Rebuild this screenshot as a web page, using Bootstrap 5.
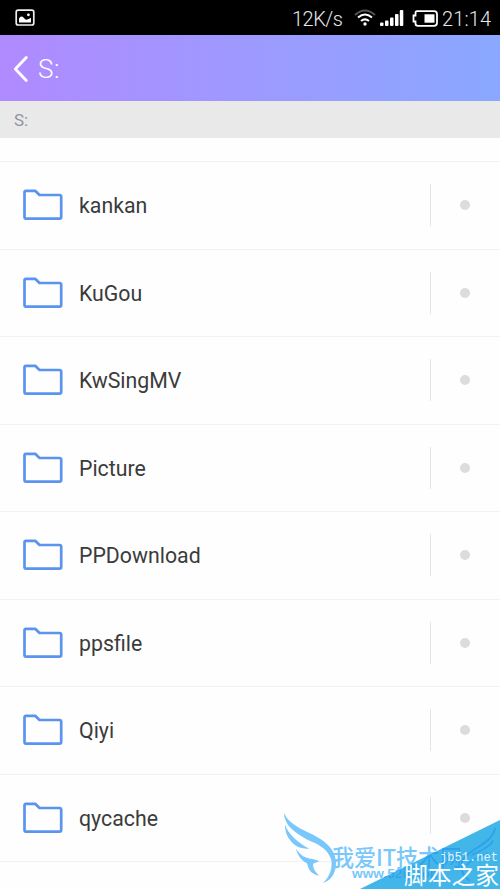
<!DOCTYPE html>
<html lang="zh-CN">
<head>
<meta charset="utf-8">
<meta name="viewport" content="width=device-width, initial-scale=1">
<title>S:</title>
<link rel="stylesheet" href="https://cdn.jsdelivr.net/npm/bootstrap@5.3.0/dist/css/bootstrap.min.css">
<style>
body{font-family:Roboto,"Noto Sans CJK SC",sans-serif;background:#fefefe;color:#3b3b3b}
.screen{width:500px;height:889px}
.status{height:35px;background:#000;color:#e8e8e8;font-size:20px;font-weight:300;padding:1px 8px 0 15px}
.status span{line-height:33px;white-space:nowrap;padding-top:2px}
.rate{width:50px;margin-right:12px;letter-spacing:-.5px}
.clock{width:50px;margin-left:4px;letter-spacing:.1px}
.titlebar{height:66px;background:linear-gradient(90deg,#b08aff,#8aa8ff);color:#fff;font-size:26px;font-weight:300;padding:1px 0 0 13px}
.titlebar span{padding:2px 0 0 1px;letter-spacing:.5px}
.pathbar{height:37px;background:#e9e9e9;color:#9393a0;font-size:17px;padding:3px 0 0 14px}
.gapline{height:24px;border-bottom:1px solid #f2f2f2}
.entry{height:87.5px;border-bottom:1px solid #f2f2f2;padding:.4px 0 0 23px}
.entry-name{font-size:21.3px;margin-left:16px;line-height:30px;padding-top:1.6px}
.sep{width:1px;height:42px;background:#e5e5e5}
.dot{width:10px;height:10px;background:#dcdcdc;margin:0 30px 0 29px}
.wm{left:270px;top:780px}
svg{display:block;flex:none}
</style>
</head>
<body>
<div class="screen position-relative overflow-hidden">
<header>
<div class="status d-flex align-items-center">
<svg width="20" height="18" viewBox="0 0 20 18"><rect x="1.2" y="1.2" width="17.6" height="14.8" rx="2" fill="none" stroke="#eee" stroke-width="1.7"/><path d="M4 13.5V9.5q2-3.5 5-.5 1.5 2.5 3 1.500l4-1.500v4.500z" fill="#fff"/><circle cx="13.4" cy="5.8" r="1.4" fill="#fff"/></svg>
<span class="rate ms-auto">12K/s</span>
<svg width="22" height="18" viewBox="0 0 22 18" fill="none" stroke="#fff" stroke-width="2"><path d="M1 6Q11-3 21 6" stroke="#555"/><path d="M4 8.4Q11 2.5 18 8.4M7 12Q11 8.7 15 12"/><circle cx="11" cy="15" r="1.7" fill="#fff" stroke="none"/></svg>
<svg class="ms-1" width="24" height="18" viewBox="0 0 24 18" fill="#fff"><rect x="0" y="13.5" width="3.5" height="3.5" rx="1"/><rect x="5" y="11.5" width="3.5" height="5.5" rx="1"/><rect x="10" y="8.5" width="3.5" height="8.5" rx="1"/><rect x="15" y="5" width="3.5" height="12" rx="1"/><rect x="19.8" y="1" width="3.5" height="16" rx="1"/></svg>
<svg class="ms-2" width="26" height="17" viewBox="0 0 26 17"><path d="M5 1.2H22Q25 1.2 25 4.2V12.8Q25 15.8 22 15.8H6Q3.5 15.8 3.5 13.5V11.5H1.5V5.5H3.5V3.5Q3.5 1.2 5 1.2Z" fill="none" stroke="#fff" stroke-width="1.8"/><rect x="12.5" y="4.3" width="10" height="8.4" fill="#fff"/></svg>
<span class="clock">21:14</span>
</div>
<div class="titlebar d-flex align-items-center">
<svg width="16" height="28" viewBox="0 0 16 28"><path d="M13.3 2.5L2.3 14 13.3 25.5" fill="none" stroke="#fff" stroke-width="2.8" stroke-linecap="round" stroke-linejoin="round"/></svg>
<span class="ms-2">S:</span>
</div>
<div class="pathbar d-flex align-items-center">S:</div>
</header>
<main id="files"><div class="gapline"></div></main>
<div class="wm position-absolute">
<svg width="230" height="109" viewBox="0 0 230 109">
<path d="M100 68L160 54L230 36V109H90Z" fill="#fefefe"/>
<path d="M90 109L230 40V109Z" fill="#42b6e9"/>
<g fill="#79c7fb"><path d="M14 33C16 37 18 40 22 43C32 51 44 54 52 60C62 67 66 75 66 83C66 94 61 100 53 103C60 96 62 90 61.5 81C60 73 53 67 45 63C35 59 25 53 18 45C16 41 14 38 14 33Z"/><path d="M15 44.5C18 54 28 63 39.3 68.7C34 69 30 68 26.7 66.3C19 61 15 54 15 44.5Z"/><path d="M26 68.7C29 73 32 76 36 77.5C40 79 45 79 49.5 81.3L43.3 83.5C42.5 88 45 92 49.5 95.5C45 95 42 93 40 90.7C38 88 38 85 36.7 83C32 81 28 76 26 68.7Z"/></g>
<g fill="none" stroke="#2ba3ea" stroke-linecap="round"><path d="M225 49C221 63 205 67 196 76C188 84 191 94 199 100" stroke-width="2"/><path d="M223 61C217 70 208 71 202 75M217 73C209 80 202 78 197 85" stroke-width="1.5"/></g>
<defs><clipPath id="overBlue"><path d="M90 109L230 40V109Z"/></clipPath>
<g id="site"><text x="62" y="86" font-family="'Noto Sans CJK SC',sans-serif" font-size="23" font-weight="500" textLength="130" lengthAdjust="spacingAndGlyphs">我爱IT技术网</text><text x="82" y="98" font-family="'Liberation Sans',sans-serif" font-size="12" font-weight="700" textLength="90" lengthAdjust="spacingAndGlyphs">www.52ij.com</text></g></defs>
<use href="#site" fill="#79c7fb"/><use href="#site" fill="#2ba3ea" clip-path="url(#overBlue)"/>
<text x="170" y="81" fill="#e2f5ff" font-family="'Liberation Mono',monospace" font-size="12" textLength="58">jb51.net</text>
<text x="134" y="104" fill="#fff" font-family="'Noto Sans CJK SC',sans-serif" font-size="24" textLength="95" lengthAdjust="spacingAndGlyphs">脚本之家</text>
</svg>
</div>
</div>
<script src="https://cdn.jsdelivr.net/npm/bootstrap@5.3.0/dist/js/bootstrap.bundle.min.js"></script>
<script>
const files=document.getElementById('files');
for(const name of ['kankan','KuGou','KwSingMV','Picture','PPDownload','ppsfile','Qiyi','qycache'])
files.insertAdjacentHTML('beforeend',`<div class="entry d-flex align-items-center"><svg width="40" height="32" viewBox="0 0 40 32"><path d="M3 1.8H12.2L16.5 6H36.5Q38.2 6 38.2 7.7V28Q38.2 29.7 36.5 29.7H3Q1.5 29.7 1.5 28V3.5Q1.5 1.8 3 1.8Z" fill="none" stroke="#5a94ef" stroke-width="2.7" stroke-linejoin="round"/></svg><span class="entry-name">${name}</span><span class="sep ms-auto"></span><span class="dot rounded-circle"></span></div>`);
</script>
</body>
</html>
